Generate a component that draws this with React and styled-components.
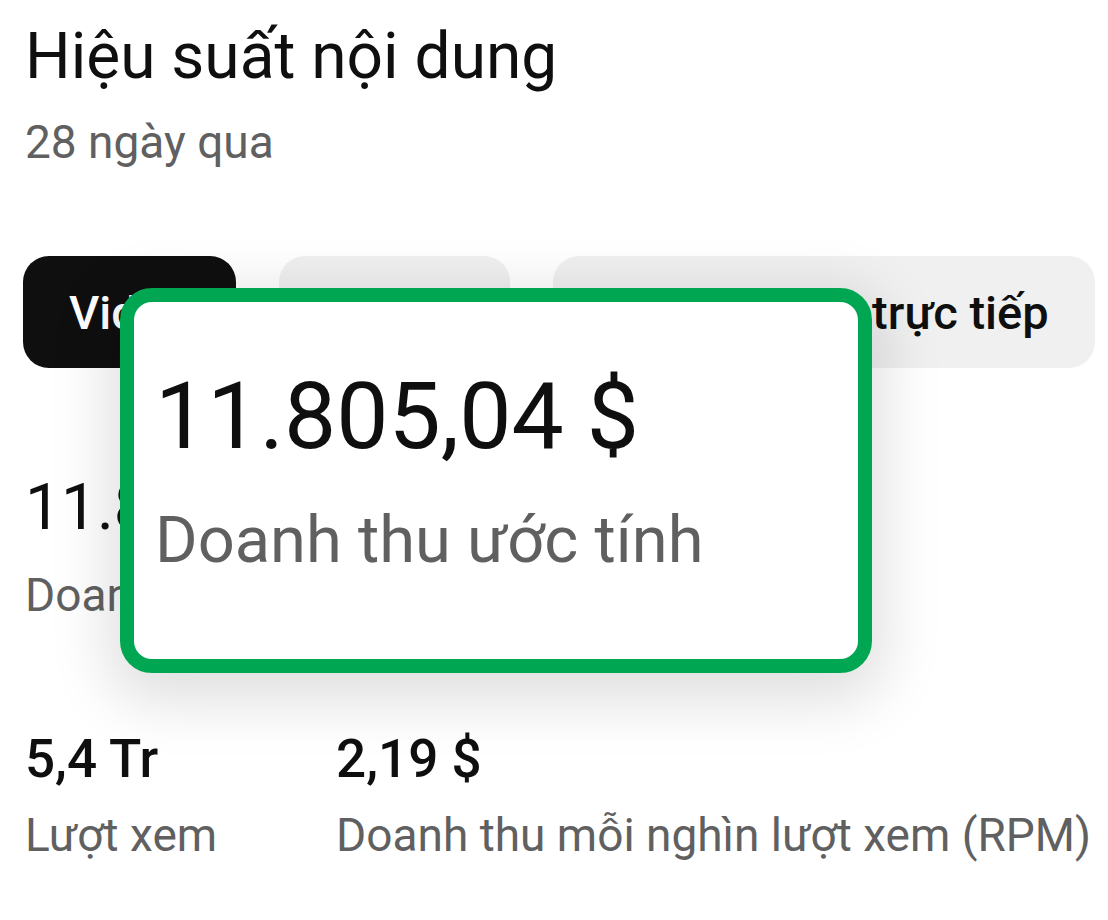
import React from "react";
import styled, { createGlobalStyle } from "styled-components";

const Global = createGlobalStyle`
  html, body { margin: 0; padding: 0; background: #ffffff; }
  body { font-family: Roboto, "Noto Sans", "Liberation Sans", sans-serif; color: #0f0f0f; }
`;

const Page = styled.div`
  position: relative;
  width: 1108px;
  height: 920px;
  overflow: hidden;
  box-sizing: border-box;
  padding: 19px 0 0 25px;
`;

const Title = styled.h1`
  margin: 0;
  font-size: 64px;
  line-height: 76px;
  font-weight: 400;
  color: #0f0f0f;
`;

const Subtitle = styled.div`
  margin-top: 20px;
  font-size: 46px;
  line-height: 54px;
  color: #606060;
`;

const Tabs = styled.div`
  display: flex;
  gap: 43px;
  margin-top: 87px;
  margin-left: -2px;
`;

const Tab = styled.div`
  height: 112px;
  box-sizing: border-box;
  padding: 0 46px;
  border-radius: 26px;
  display: flex;
  align-items: center;
  font-size: 47px;
  font-weight: 500;
  white-space: nowrap;
  background: ${(p) => (p.$active ? "#0f0f0f" : "#f0f0f0")};
  color: ${(p) => (p.$active ? "#ffffff" : "#0f0f0f")};
`;

const Metric = styled.div`
  margin-top: 105px;
  display: flex;
  flex-direction: column;
  gap: 25px;
`;

const BigValue = styled.div`
  font-size: 64px;
  line-height: 70px;
  color: #0f0f0f;
`;

const Label = styled.div`
  font-size: 46px;
  line-height: 54px;
  color: #606060;
  white-space: nowrap;
`;

const StatsRow = styled.div`
  display: flex;
  gap: 119px;
  margin-top: 107px;
`;

const Stat = styled.div`
  display: flex;
  flex-direction: column;
  gap: 19px;
`;

const StatValue = styled.div`
  font-size: 53px;
  line-height: 60px;
  font-weight: 500;
  color: #0f0f0f;
`;

const Callout = styled.div`
  position: absolute;
  left: 120px;
  top: 288px;
  width: 752px;
  height: 385px;
  box-sizing: border-box;
  border: 14px solid #00a651;
  border-radius: 32px;
  background: #ffffff;
  box-shadow: 0 16px 60px 12px rgba(0, 0, 0, 0.13);
  padding: 60px 0 0 21px;
  display: flex;
  flex-direction: column;
`;

const CalloutValue = styled.div`
  font-size: 93px;
  line-height: 110px;
  color: #0f0f0f;
`;

const CalloutLabel = styled.div`
  margin-top: 30px;
  font-size: 65px;
  line-height: 76px;
  color: #606060;
`;

export default function App() {
  return (
    <>
      <Global />
      <Page>
        <Title>Hiệu suất nội dung</Title>
        <Subtitle>28 ngày qua</Subtitle>
        <Tabs>
          <Tab $active>Video</Tab>
          <Tab>Shorts</Tab>
          <Tab>Sự kiện phát trực tiếp</Tab>
        </Tabs>
        <Metric>
          <BigValue>11.805,04 $</BigValue>
          <Label>Doanh thu ước tính</Label>
        </Metric>
        <StatsRow>
          <Stat>
            <StatValue>5,4 Tr</StatValue>
            <Label>Lượt xem</Label>
          </Stat>
          <Stat>
            <StatValue>2,19 $</StatValue>
            <Label>Doanh thu mỗi nghìn lượt xem (RPM)</Label>
          </Stat>
        </StatsRow>
        <Callout>
          <CalloutValue>11.805,04 $</CalloutValue>
          <CalloutLabel>Doanh thu ước tính</CalloutLabel>
        </Callout>
      </Page>
    </>
  );
}
